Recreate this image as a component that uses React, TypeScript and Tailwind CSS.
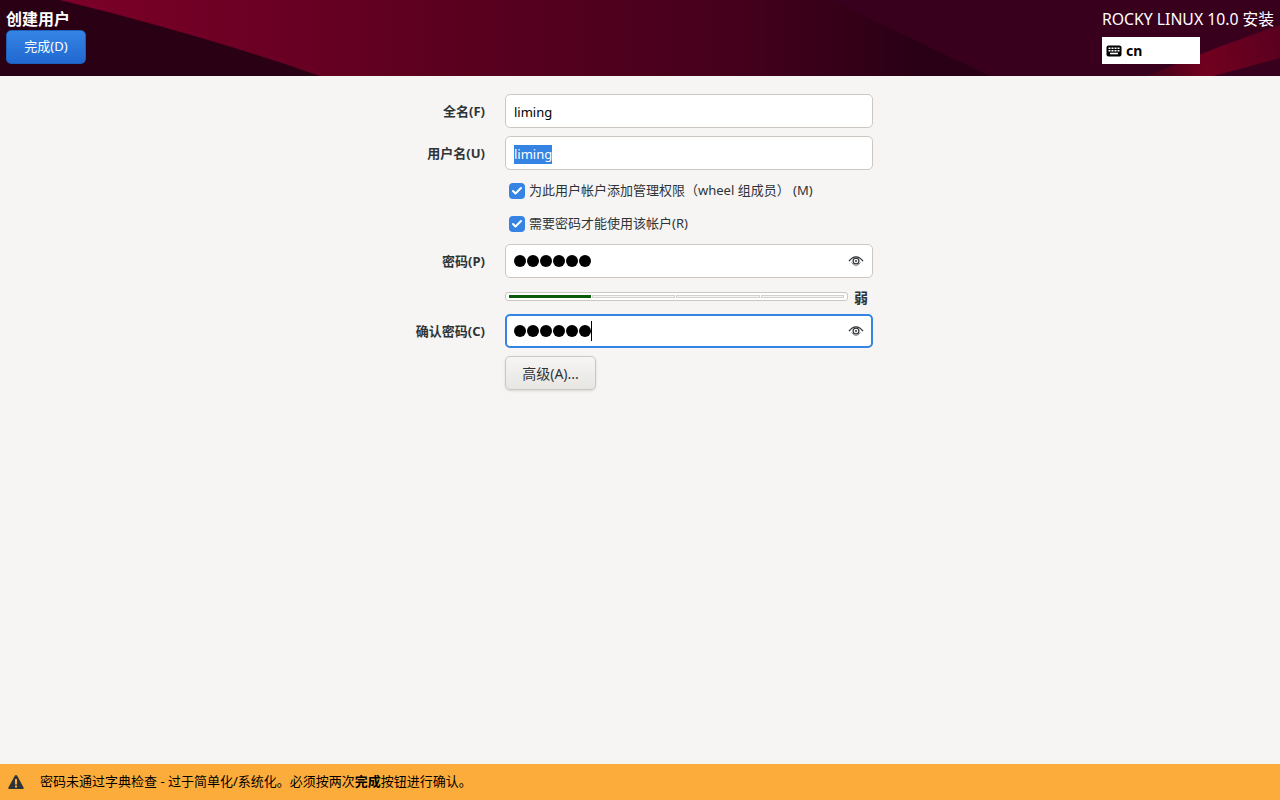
import { Check } from "lucide-react"

const font = "font-['Noto_Sans','Noto_Sans_CJK_SC',sans-serif]"

function Label({ text }: { text: string }) {
  return <div className="w-[86px] pr-[1px] pt-[1px] text-right text-[13px] font-bold text-[#2e3436] whitespace-nowrap">{text}</div>
}

function PasswordDots() {
  return (
    <div className="flex gap-[1px]">
      {[0, 1, 2, 3, 4, 5].map((i) => (
        <span key={i} className="h-3 w-3 rounded-full bg-black" />
      ))}
    </div>
  )
}

function EyeIcon() {
  return (
    <svg className="h-4 w-4 text-[#2e3436]" viewBox="0 0 16 16" fill="none" stroke="currentColor">
      <path d="M1 8.2 C3.5 4.6 5.8 3.8 8 3.8 C10.2 3.8 12.5 4.6 15 8.2" strokeWidth="1.3" />
      <path d="M3.6 9.4 C5 11.6 6.5 12.4 8 12.4 C9.5 12.4 11 11.6 12.4 9.4" strokeWidth="0.8" opacity="0.7" />
      <circle cx="8" cy="8" r="2.9" strokeWidth="1.2" />
      <circle cx="8" cy="8" r="1" fill="currentColor" stroke="none" />
    </svg>
  )
}

function KeyboardIcon() {
  return (
    <svg className="h-[14px] w-4" viewBox="0 0 16 14">
      <rect x="0.5" y="1.5" width="15" height="11" rx="2" fill="#000" />
      <g fill="#fff">
        <rect x="2.5" y="3.5" width="2" height="1.5" />
        <rect x="5.5" y="3.5" width="2" height="1.5" />
        <rect x="8.5" y="3.5" width="2" height="1.5" />
        <rect x="11.5" y="3.5" width="2" height="1.5" />
        <rect x="2.5" y="6" width="2" height="1.5" />
        <rect x="5.5" y="6" width="2" height="1.5" />
        <rect x="8.5" y="6" width="2" height="1.5" />
        <rect x="11.5" y="6" width="2" height="1.5" />
        <rect x="4" y="8.7" width="8" height="1.6" />
      </g>
    </svg>
  )
}

function WarningIcon() {
  return (
    <svg className="h-4 w-4" viewBox="0 0 16 16">
      <path d="M8 1 C8.5 1 8.9 1.3 9.2 1.8 L15.6 13.4 C16 14.2 15.5 15 14.6 15 L1.4 15 C0.5 15 0 14.2 0.4 13.4 L6.8 1.8 C7.1 1.3 7.5 1 8 1 Z" fill="#2e3436" />
      <rect x="7" y="5" width="2" height="5.5" fill="#fcac3b" />
      <rect x="7" y="11.5" width="2" height="2" fill="#fcac3b" />
    </svg>
  )
}

function CheckRow({ text, first }: { text: string; first?: boolean }) {
  return (
    <div className={`${first ? "mt-1" : ""} ml-[105px] flex h-[33px] items-center gap-[4px] pl-1 text-[13px] text-[#2e3436]`}>
      <span className="flex h-4 w-4 items-center justify-center rounded-[4px] bg-[#3584e4]">
        <Check className="h-3 w-3 text-white" strokeWidth={4} />
      </span>
      <span>{text}</span>
    </div>
  )
}

function Header() {
  return (
    <header className="relative flex h-[76px] justify-between overflow-hidden bg-[#2a0114] pl-[6px] pr-[6px] pt-[9px]">
      <svg className="absolute inset-0 h-full w-full" viewBox="0 0 1280 76" preserveAspectRatio="none">
        <defs>
          <linearGradient id="wave" gradientUnits="userSpaceOnUse" x1="60" x2="960" y1="0" y2="0">
            <stop offset="0" stopColor="#7c0028" />
            <stop offset="0.45" stopColor="#5a001f" />
            <stop offset="0.75" stopColor="#45001c" />
            <stop offset="0.95" stopColor="#2a0016" />
          </linearGradient>
          <linearGradient id="streak" gradientUnits="userSpaceOnUse" x1="1160" x2="1280" y1="76" y2="30">
            <stop offset="0" stopColor="#4a001c" />
            <stop offset="0.35" stopColor="#72001f" />
            <stop offset="1" stopColor="#5a0020" />
          </linearGradient>
        </defs>
        <path d="M60 0 C150 22 240 48 320 76 L990 76 L830 0 Z" fill="url(#wave)" />
        <path d="M830 0 L1280 0 L1280 76 L990 76 Z" fill="#38001c" />
        <path d="M1147 76 C1190 58 1230 42 1280 25 L1280 58 L1213 76 Z" fill="url(#streak)" />
      </svg>
      <div className="relative">
        <div className="text-[16px] font-bold leading-[21px] text-white whitespace-nowrap">创建用户</div>
        <button className="h-[34px] w-[80px] rounded-[5px] border border-[#1b5fb8] bg-gradient-to-b from-[#3584e4] to-[#2168d0] text-[13px] text-white">
          完成(D)
        </button>
      </div>
      <div className="relative w-[172px]">
        <div className="text-[15.75px] leading-[21px] text-white whitespace-nowrap">ROCKY LINUX 10.0 安装</div>
        <div className="mt-[7px] flex h-[27px] w-[98px] items-center gap-[4px] bg-white pl-1 text-[14px] font-bold text-black">
          <KeyboardIcon />
          <span>cn</span>
        </div>
      </div>
    </header>
  )
}

export default function App() {
  return (
    <div className={`${font} flex h-[800px] w-[1280px] flex-col bg-[#f6f5f4]`}>
      <Header />
      <main className="flex-1 pl-[400px] pt-[18px]">
        <div className="flex flex-col">
          <div className="flex items-center gap-[19px]">
            <Label text="全名(F)" />
            <div className="flex h-[34px] w-[368px] items-center rounded-[5px] border border-[#cdc7c2] bg-white px-2 pt-[3px] text-[13px] text-black">liming</div>
          </div>
          <div className="mt-2 flex items-center gap-[19px]">
            <Label text="用户名(U)" />
            <div className="flex h-[34px] w-[368px] items-center rounded-[5px] border border-[#cdc7c2] bg-white px-2 pt-[3px] text-[13px]">
              <span className="bg-[#3584e4] text-white">liming</span>
            </div>
          </div>
          <CheckRow first text="为此用户帐户添加管理权限（wheel 组成员） (M)" />
          <CheckRow text="需要密码才能使用该帐户(R)" />
          <div className="mt-1 flex items-center gap-[19px]">
            <Label text="密码(P)" />
            <div className="flex h-[34px] w-[368px] items-center justify-between rounded-[5px] border border-[#cdc7c2] bg-white pl-2 pr-2">
              <PasswordDots />
              <EyeIcon />
            </div>
          </div>
          <div className="ml-[105px] mt-3 flex h-[12px] w-[368px] items-center gap-[6px]">
            <div className="flex h-[9px] w-[343px] items-center gap-[1px] rounded-[3px] border border-[#cdc7c2] bg-white px-[3px]">
              <span className="h-[3px] flex-1 bg-[#0a5c0a]" />
              <span className="h-[3px] flex-1 border border-[#d5d0cc] bg-[#f6f5f4]" />
              <span className="h-[3px] flex-1 border border-[#d5d0cc] bg-[#f6f5f4]" />
              <span className="h-[3px] flex-1 border border-[#d5d0cc] bg-[#f6f5f4]" />
            </div>
            <span className="mt-[2px] text-[14px] font-bold text-[#2e3436]">弱</span>
          </div>
          <div className="mt-3 flex items-center gap-[19px]">
            <Label text="确认密码(C)" />
            <div className="flex h-[34px] w-[368px] items-center justify-between rounded-[5px] border-2 border-[#3584e4] bg-white pl-[7px] pr-[7px]">
              <div className="flex items-center">
                <PasswordDots />
                <span className="h-[20px] w-[1px] bg-black" />
              </div>
              <EyeIcon />
            </div>
          </div>
          <button className="ml-[105px] mt-2 h-[34px] w-[91px] rounded-[5px] border border-[#cdc7c2] bg-gradient-to-b from-[#f6f5f4] to-[#e8e6e3] pt-[1px] text-[14px] text-[#2e3436] shadow-sm">
            高级(A)...
          </button>
        </div>
      </main>
      <footer className="flex h-[36px] items-center bg-[#fcac3b] pl-2 text-[13px] text-black">
        <WarningIcon />
        <span className="ml-4">
          密码未通过字典检查 - 过于简单化/系统化。必须按两次<b>完成</b>按钮进行确认。
        </span>
      </footer>
    </div>
  )
}
